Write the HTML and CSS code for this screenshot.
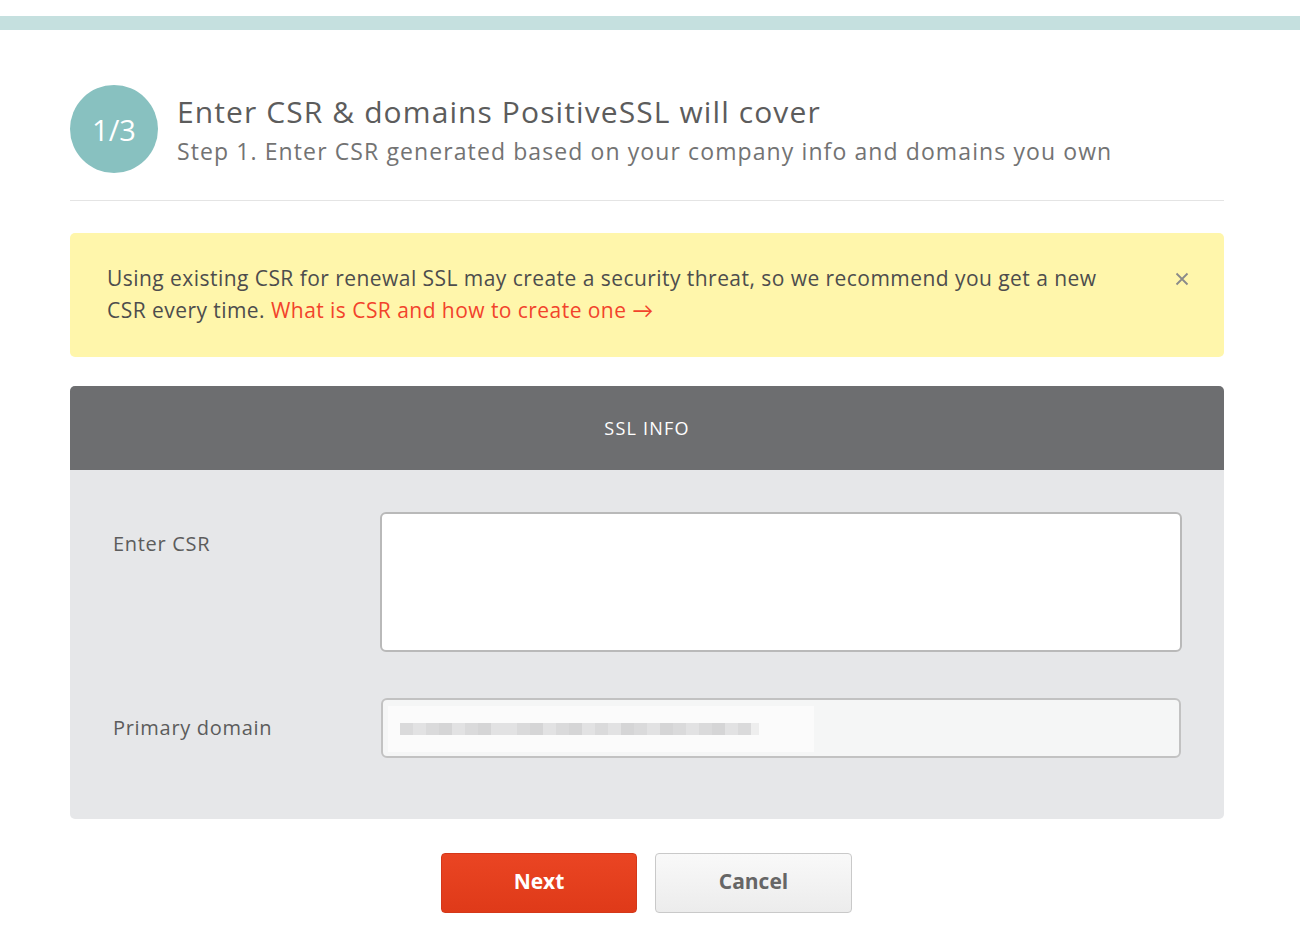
FILE: index.html
```html
<!DOCTYPE html>
<html>
<head>
<meta charset="utf-8">
<link rel="stylesheet" href="styles.css">
</head>
<body>
<div class="topbar"></div>
<div class="wrap">
  <div class="head">
    <div class="step">1/3</div>
    <div class="head-text">
      <h1 class="title">Enter CSR &amp; domains PositiveSSL will cover</h1>
      <p class="subtitle">Step 1. Enter CSR generated based on your company info and domains you own</p>
    </div>
  </div>
  <div class="divider"></div>
  <div class="alert">
    <div class="alert-text">
      <div class="alert-line">Using existing CSR for renewal SSL may create a security threat, so we recommend you get a new</div>
      <div class="alert-line">CSR every time. <a class="alert-link" href="#">What is CSR and how to create one →</a></div>
    </div>
    <span class="alert-close">
      <svg width="14" height="14" viewBox="0 0 14 14"><path d="M1.5 1.5 L12.5 12.5 M12.5 1.5 L1.5 12.5" stroke="#8a8a8a" stroke-width="1.8" fill="none"/></svg>
    </span>
  </div>
  <div class="panel">
    <div class="panel-head">SSL INFO</div>
    <div class="panel-body">
      <div class="row">
        <label class="label">Enter CSR</label>
        <div class="textarea"></div>
      </div>
      <div class="row">
        <label class="label">Primary domain</label>
        <div class="input">
          <div class="blur">
            <span class="px s1"></span><span class="px s2"></span><span class="px s1"></span><span class="px s3"></span><span class="px s2"></span><span class="px s1"></span><span class="px s3"></span><span class="px s2"></span><span class="px s2"></span><span class="px s1"></span><span class="px s3"></span><span class="px s2"></span><span class="px s1"></span><span class="px s3"></span><span class="px s2"></span><span class="px s1"></span><span class="px s2"></span><span class="px s3"></span><span class="px s1"></span><span class="px s2"></span><span class="px s3"></span><span class="px s1"></span><span class="px s2"></span><span class="px s1"></span><span class="px s3"></span><span class="px s2"></span><span class="px s1"></span><span class="px s4"></span>
          </div>
        </div>
      </div>
    </div>
  </div>
  <div class="actions">
    <button class="btn btn-next">Next</button>
    <button class="btn btn-cancel">Cancel</button>
  </div>
</div>
</body>
</html>
```
FILE: styles.css
```css
* { box-sizing: border-box; }
html, body { margin: 0; padding: 0; background: #fff; }
body { font-family: "Open Sans", Lato, sans-serif; color: #555; }

.topbar { margin-top: 16px; height: 14px; background: #c5e0df; }

.wrap { width: 1154px; margin-left: 70px; }

.head { display: flex; align-items: center; gap: 19px; margin-top: 55px; }
.step {
  width: 88px; height: 88px; border-radius: 50%;
  background: #88c1c0; color: #fff;
  display: flex; align-items: center; justify-content: center;
  font-size: 29px; font-weight: 400;
  flex: none;
}
.title { margin: 0; font-size: 30px; font-weight: 400; color: #5c5c5c; line-height: 36px; letter-spacing: 1.1px; }
.subtitle { margin: 7px 0 0; font-size: 23px; font-weight: 400; color: #737373; line-height: 28px; letter-spacing: 1.1px; }

.divider { height: 1px; background: #e4e4e4; margin-top: 27px; }

.alert {
  margin-top: 32px; background: #fff6ab; border-radius: 5px;
  padding: 29px 30px 31px 37px;
  display: flex; justify-content: space-between; align-items: flex-start;
}
.alert-text { font-size: 21px; line-height: 32px; color: #4d4d4d; letter-spacing: 0.45px; white-space: nowrap; }
.alert-link { color: #f2432b; text-decoration: none; }
.alert-close { margin-top: 10px; margin-right: 5px; width: 14px; height: 14px; display: flex; }

.panel { margin-top: 29px; border-radius: 5px; overflow: hidden; background: #e6e7e9; }
.panel-head {
  height: 84px; background: #6d6e70; color: #fff;
  display: flex; align-items: center; justify-content: center;
  font-size: 18px; letter-spacing: 1.2px;
}
.panel-body { padding: 42px 42px 61px 43px; display: flex; flex-direction: column; gap: 46px; }
.row { display: flex; align-items: flex-start; }
.label { width: 267px; flex: none; font-size: 20px; color: #5c5c5c; line-height: 24px; letter-spacing: 0.7px; }
.row:first-child .label { margin-top: 20px; }
.row:last-child .label { margin-top: 18px; }
.textarea {
  flex: 1; height: 140px; background: #fff;
  border: 2px solid #b9b9b9; border-radius: 6px;
}
.input {
  flex: 1; height: 60px; margin-left: 1px; margin-right: 1px; background: #f5f6f6;
  border: 2px solid #c2c2c2; border-radius: 6px; position: relative;
}
.blur {
  position: absolute; left: 5px; top: 6px; width: 426px; height: 46px;
  background: #fbfbfb; display: flex; align-items: center; padding-left: 12px;
}
.px { display: block; height: 12px; width: 13px; }
.s1 { background: #dadadb; }
.s2 { background: #e2e2e3; }
.s3 { background: #d5d5d6; }
.s4 { background: #eeeeee; width: 8px; }

.actions { display: flex; justify-content: center; gap: 18px; margin-top: 34px; padding-right: 1px; }
.btn {
  width: 196px; height: 60px; border-radius: 4px;
  font-family: "Open Sans", Lato, sans-serif; font-size: 21px; font-weight: 700;
  cursor: pointer; padding: 0 0 4px;
}
.btn-next { background: linear-gradient(#ea4523, #df3a19); color: #fff; border: 1px solid #d4381a; }
.btn-cancel { width: 197px; background: linear-gradient(#f9f9f9, #ececec); color: #666; border: 1px solid #c9c9c9; }
```
